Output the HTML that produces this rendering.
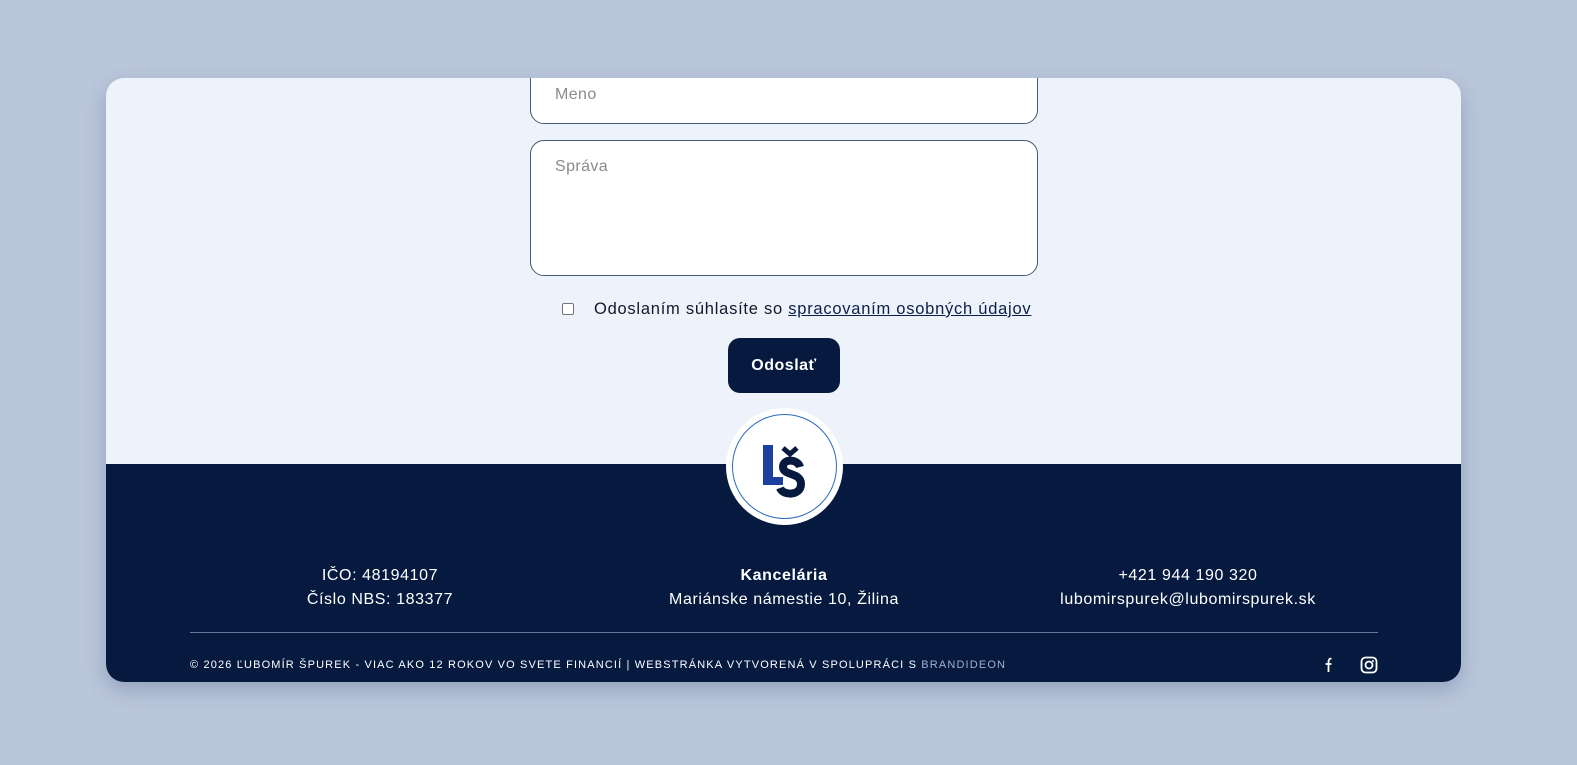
<!DOCTYPE html>
<html><head><meta charset="utf-8"><style>
*{box-sizing:border-box;margin:0;padding:0}
body{width:1577px;height:765px;background:#bac6db;font-family:"Liberation Sans",sans-serif;position:relative;overflow:hidden}
.card{position:absolute;left:106px;top:78px;width:1355px;height:604px;border-radius:18px;overflow:hidden;background:#edf2fb;box-shadow:0 8px 20px rgba(40,60,100,.25)}
.foot{position:absolute;left:0;top:386px;width:100%;height:218px;background:#061a40}
.inp{position:absolute;left:424px;width:508px;background:#fff;border:1px solid #4a5878;border-radius:14px;color:#8a8a8a;font-size:16px;padding-left:24px;letter-spacing:.4px}
.chk{position:absolute;left:456px;top:225px;width:12px;height:12px;border:1px solid #777;border-radius:2px;background:#fff}
.lbl{position:absolute;left:488px;top:222px;font-size:16.5px;color:#111a2b;letter-spacing:.75px;white-space:nowrap}
.lbl a{color:#0c1f4a;text-decoration:underline}
.btn{position:absolute;left:622px;top:260px;width:112px;height:55px;border-radius:12px;background:#061a40;color:#fff;font-weight:bold;font-size:16px;text-align:center;line-height:55px;letter-spacing:.5px}
.logo{position:absolute;left:620px;top:330px;width:117px;height:117px;border-radius:50%;background:#fff}
.logo .ring{position:absolute;left:6px;top:6px;width:105px;height:105px;border-radius:50%;border:1.5px solid #2a6ac0}
.col{position:absolute;top:486px;width:400px;text-align:center;color:#fff;font-size:16px;line-height:24px;letter-spacing:.6px;white-space:nowrap}
.hr{position:absolute;left:84px;right:83px;top:554px;height:1px;background:#6a7794}
.copy{position:absolute;left:84px;top:581px;color:#fff;font-size:11px;letter-spacing:1.15px;text-transform:uppercase;white-space:nowrap}
.copy span{color:#9fb0d0}
</style></head><body>
<div class="card">
 <div class="inp" style="top:-20px;height:66px;padding-top:27px">Meno</div>
 <div class="inp" style="top:62px;height:136px;padding-top:17px">Správa</div>
 <div class="chk"></div>
 <div class="lbl">Odoslaním súhlasíte so <a>spracovaním osobných údajov</a></div>
 <div class="btn">Odoslať</div>
 <div class="foot"></div>
 <div class="logo"><div class="ring"></div>
  <svg width="117" height="117" viewBox="0 0 117 117" style="position:absolute;left:0;top:0">
   <rect x="37" y="37" width="10" height="40" fill="#1d3f9e"/>
   <rect x="37" y="69" width="20" height="8" fill="#1d3f9e"/>
   <path d="M57 40 L64 46 L71 40" stroke="#061a40" stroke-width="5" fill="none"/>
   <path d="M74 59 C72 51 57 50 57 59 C57 68 75 64 75 76 C75 88 57 88 54 80" stroke="#061a40" stroke-width="8" fill="none"/>
  </svg>
 </div>
 <div class="col" style="left:74px">IČO: 48194107<br>Číslo NBS: 183377</div>
 <div class="col" style="left:478px"><b>Kancelária</b><br>Mariánske námestie 10, Žilina</div>
 <div class="col" style="left:882px">+421 944 190 320<br>lubomirspurek@lubomirspurek.sk</div>
 <div class="hr"></div>
 <div class="copy">© 2026 Ľubomír Špurek - viac ako 12 rokov vo svete financií | Webstránka vytvorená v spolupráci s <span>Brandideon</span></div>
 <svg style="position:absolute;left:1216px;top:578px" width="14" height="18" viewBox="0 0 14 18"><path d="M9.5 2.5 C7 2.5 6.5 4 6.5 6 V16 M3.5 8 H9.5" stroke="#fff" stroke-width="1.8" fill="none"/></svg>
 <svg style="position:absolute;left:1254px;top:578px" width="18" height="18" viewBox="0 0 18 18"><rect x="1.5" y="1.5" width="15" height="15" rx="4" stroke="#fff" stroke-width="1.8" fill="none"/><circle cx="9" cy="9" r="3.5" stroke="#fff" stroke-width="1.8" fill="none"/><circle cx="13" cy="5" r="1" fill="#fff"/></svg>
</div>
</body></html>
